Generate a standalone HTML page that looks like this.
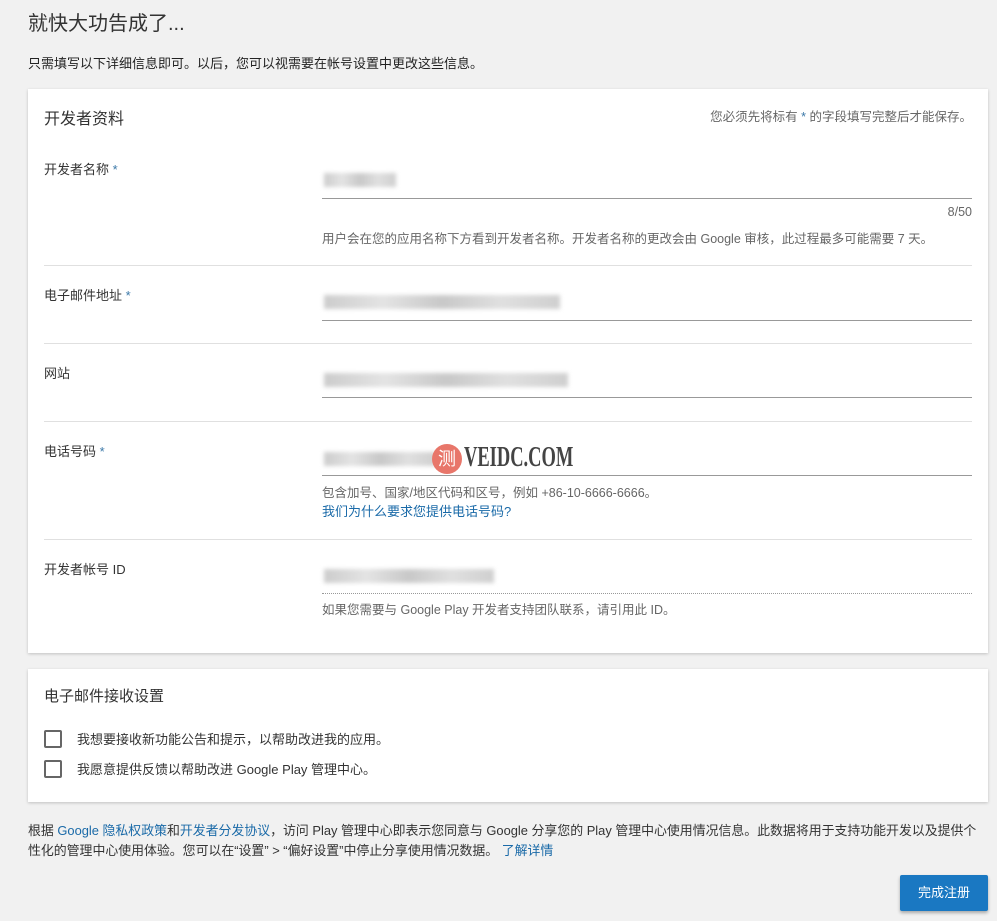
<!DOCTYPE html>
<html><head><meta charset="utf-8"><style>
body{margin:0;background:#f1f1f1;font-family:"Liberation Sans","Noto Sans CJK SC",sans-serif;color:#333;width:997px;height:921px;position:relative;overflow:hidden;font-size:13px}
.a{position:absolute;white-space:nowrap}
.card{position:absolute;left:28px;width:960px;background:#fff;box-shadow:0 1px 3px rgba(0,0,0,.2)}
.st{color:#3b78a8}
.line{position:absolute;height:1px;background:#999;left:322px;width:650px}
.sep{position:absolute;height:1px;background:#e0e0e0;left:44px;width:928px}
.blur{position:absolute;height:14px;background:linear-gradient(90deg,#ccc,#e4e4e4,#c8c8c8,#e0e0e0,#cfcfcf);filter:blur(2px)}
.hint{color:#666;font-size:12.5px}
a{color:#1a6aa8;text-decoration:none}
.cb{position:absolute;left:44px;width:14px;height:14px;border:2px solid #666;border-radius:2px}
</style></head><body>
<div class="a" style="left:28px;top:7px;font-size:20px;color:#333">就快大功告成了...</div>
<div class="a" style="left:28px;top:53px;font-size:13px;color:#222">只需填写以下详细信息即可。以后，您可以视需要在帐号设置中更改这些信息。</div>
<div class="card" style="top:89px;height:564px"></div>
<div class="a" style="left:44px;top:105px;font-size:16px">开发者资料</div>
<div class="a hint" style="right:25px;top:106px">您必须先将标有 <span class="st">*</span> 的字段填写完整后才能保存。</div>

<div class="a" style="left:44px;top:159px">开发者名称 <span class="st">*</span></div>
<div class="blur" style="left:324px;top:173px;width:72px"></div>
<div class="line" style="top:198px"></div>
<div class="a hint" style="right:25px;top:205px">8/50</div>
<div class="a hint" style="left:322px;top:228px">用户会在您的应用名称下方看到开发者名称。开发者名称的更改会由 Google 审核，此过程最多可能需要 7 天。</div>
<div class="sep" style="top:265px"></div>

<div class="a" style="left:44px;top:285px">电子邮件地址 <span class="st">*</span></div>
<div class="blur" style="left:324px;top:295px;width:236px"></div>
<div class="line" style="top:320px"></div>
<div class="sep" style="top:343px"></div>

<div class="a" style="left:44px;top:363px">网站</div>
<div class="blur" style="left:324px;top:373px;width:244px"></div>
<div class="line" style="top:397px"></div>
<div class="sep" style="top:421px"></div>

<div class="a" style="left:44px;top:441px">电话号码 <span class="st">*</span></div>
<div class="blur" style="left:324px;top:452px;width:112px"></div>
<div class="a" style="left:432px;top:444px;width:30px;height:30px;border-radius:50%;background:#e8766a;color:#fff;font-size:18px;text-align:center;line-height:30px">测</div>
<div class="a" style="left:464px;top:442px;font-family:'Liberation Serif',serif;font-weight:bold;font-size:28px;color:#444;transform:scaleX(.66);transform-origin:left">VEIDC.COM</div>
<div class="line" style="top:475px"></div>
<div class="a hint" style="left:322px;top:482px">包含加号、国家/地区代码和区号，例如 +86-10-6666-6666。</div>
<div class="a" style="left:322px;top:501px"><a>我们为什么要求您提供电话号码?</a></div>
<div class="sep" style="top:539px"></div>

<div class="a" style="left:44px;top:559px">开发者帐号 ID</div>
<div class="blur" style="left:324px;top:569px;width:170px"></div>
<div class="a" style="left:322px;top:593px;width:650px;border-top:1px dotted #999"></div>
<div class="a hint" style="left:322px;top:599px">如果您需要与 Google Play 开发者支持团队联系，请引用此 ID。</div>

<div class="card" style="top:669px;height:133px"></div>
<div class="a" style="left:44px;top:685px;font-size:15px">电子邮件接收设置</div>
<div class="cb" style="top:730px"></div>
<div class="a" style="left:77px;top:729px">我想要接收新功能公告和提示，以帮助改进我的应用。</div>
<div class="cb" style="top:760px"></div>
<div class="a" style="left:77px;top:759px">我愿意提供反馈以帮助改进 Google Play 管理中心。</div>

<div class="a" style="left:28px;top:820px;font-size:12.9px;color:#333">根据 <a>Google 隐私权政策</a>和<a>开发者分发协议</a>，访问 Play 管理中心即表示您同意与 Google 分享您的 Play 管理中心使用情况信息。此数据将用于支持功能开发以及提供个</div>
<div class="a" style="left:28px;top:840px;font-size:12.9px;color:#333">性化的管理中心使用体验。您可以在“设置” &gt; “偏好设置”中停止分享使用情况数据。 <a>了解详情</a></div>
<div class="a" style="left:900px;top:875px;width:88px;height:36px;background:#1a78c2;color:#fff;border-radius:2px;box-shadow:0 2px 3px rgba(0,0,0,.3);text-align:center;line-height:36px;font-size:13px">完成注册</div>
</body></html>
